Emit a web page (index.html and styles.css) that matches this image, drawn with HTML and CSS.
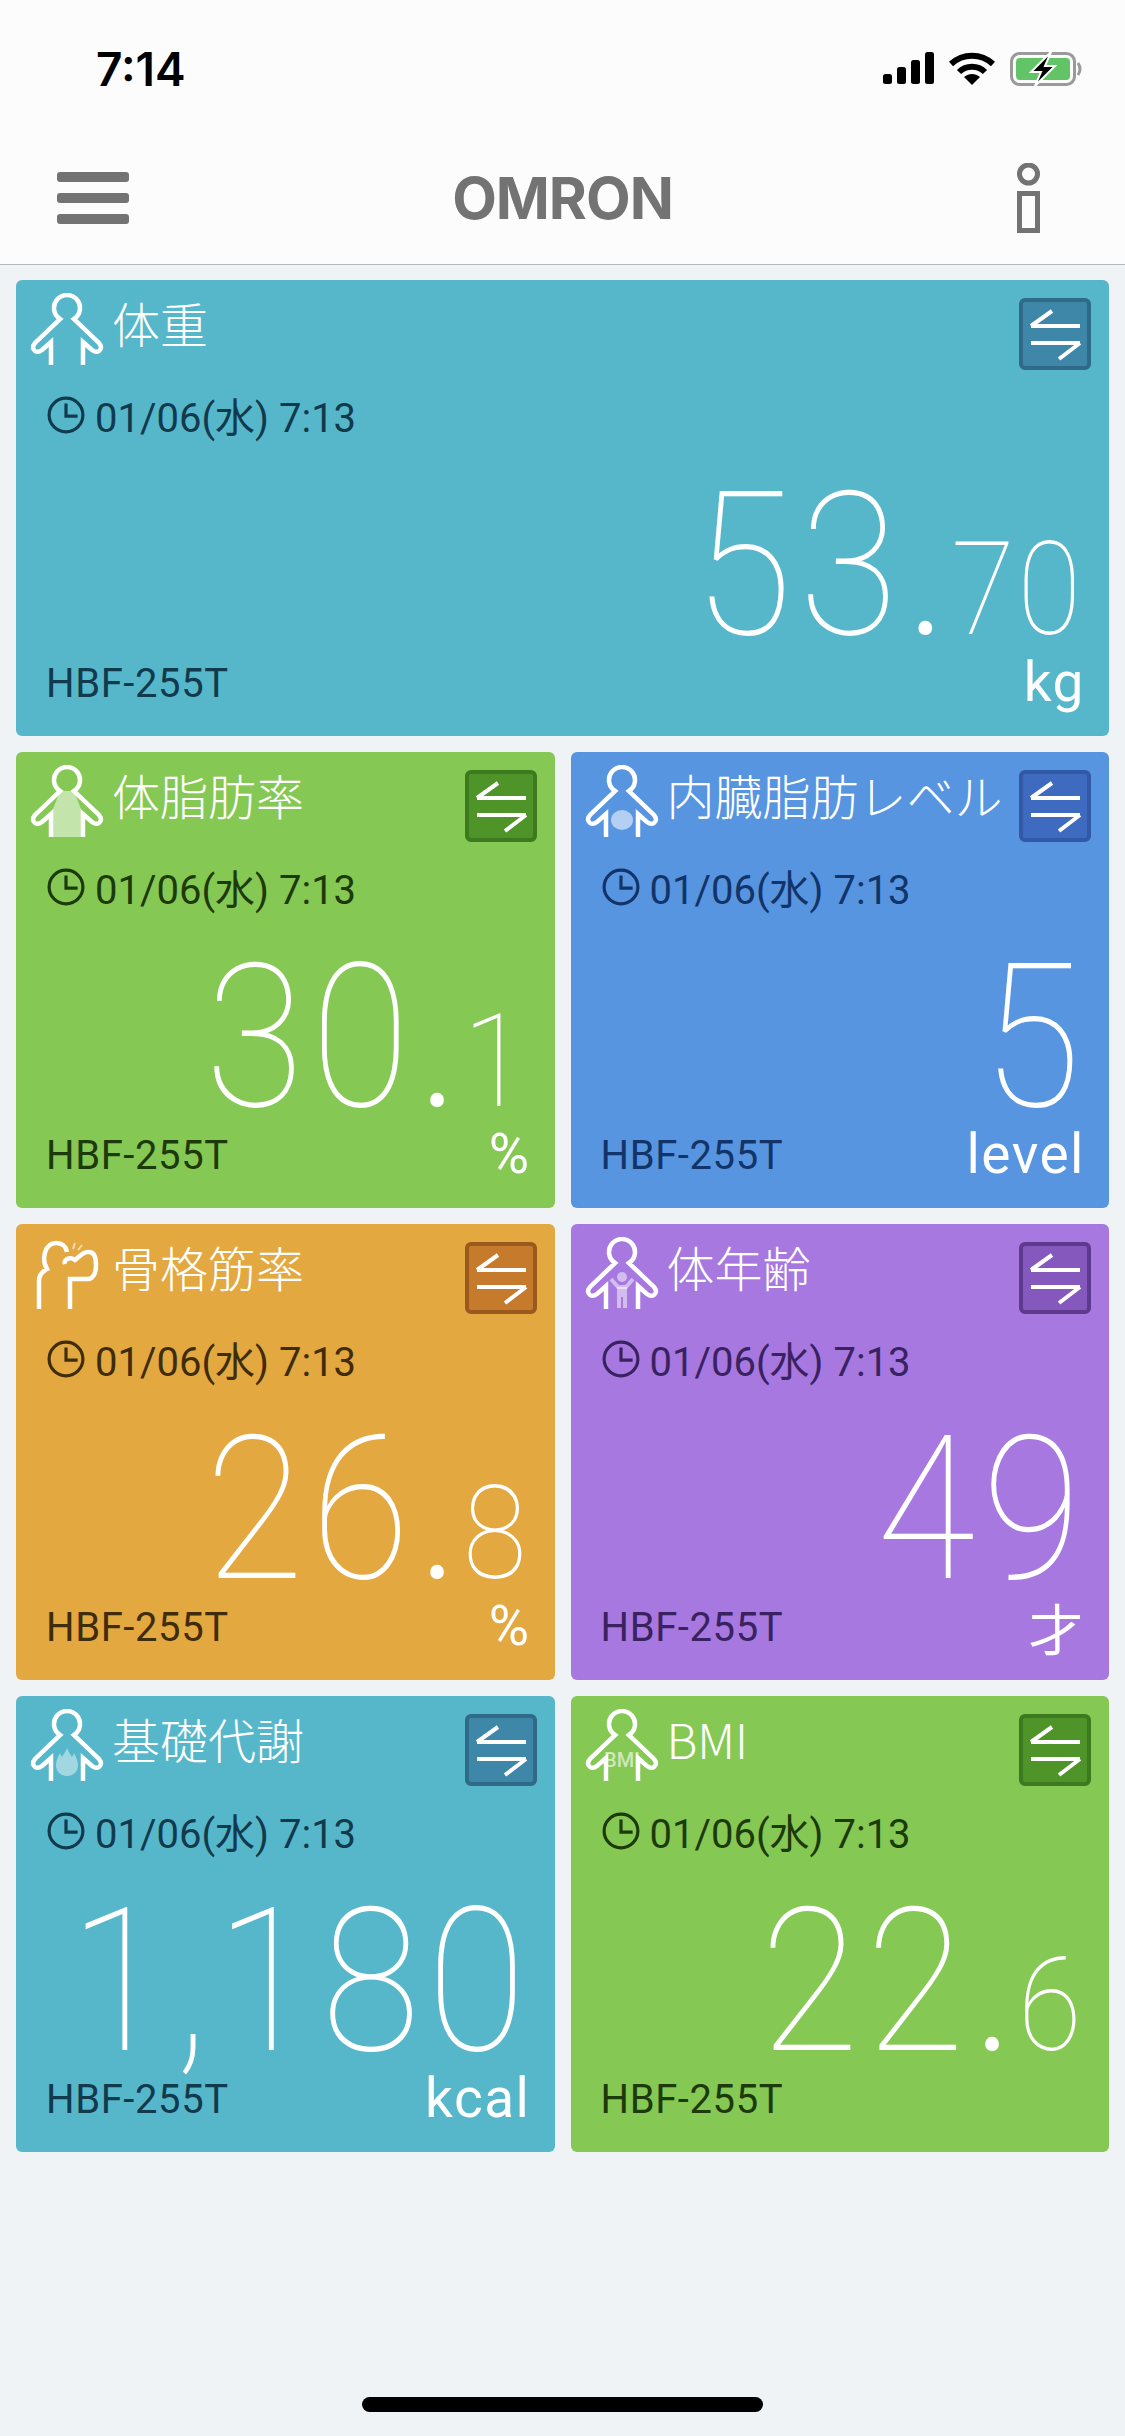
FILE: index.html
```html
<!DOCTYPE html>
<html lang="ja">
<head>
  <meta charset="utf-8">
  <title>OMRON connect</title>
  <link rel="stylesheet" href="styles.css">
</head>
<body>
  <svg class="defs" width="0" height="0">
    <symbol id="person" viewBox="0 0 76 76">
      <path d="M22 72 V49 L13 57 Q9 60 6 58 Q2 55 6 50 L31 26 A13 13 0 1 1 45 26 L70 50 Q74 55 70 58 Q67 60 63 57 L54 49 V72" fill="none" stroke="currentColor" stroke-width="4.5"/>
    </symbol>
    <symbol id="muscle" viewBox="0 0 76 76">
      <path d="M10 72 V44 Q10 36 18 32 C12 22 16 6 27 6 C33 6 37 9 38 15 M41 72 V42 H60 Q67 40 67 28 Q67 15 60 15 C54 14 50 20 46 23 Q42 20 38 22 Q35 24 36 27" fill="none" stroke="currentColor" stroke-width="4.5"/>
      <path d="M44 12 L46 6 M49 13 L53 8" fill="none" stroke="currentColor" stroke-width="2" opacity=".6"/>
    </symbol>
    <symbol id="clock" viewBox="0 0 36 36">
      <circle cx="18" cy="18" r="16" fill="none" stroke="currentColor" stroke-width="3"/>
      <path d="M18 7 V19 H29" fill="none" stroke="currentColor" stroke-width="3"/>
    </symbol>
    <symbol id="swap" viewBox="0 0 64 64">
      <path d="M8 24 H57 M8 24 L29 9 M8 41 H57 M57 41 L36 57" fill="none" stroke="#fff" stroke-width="4"/>
    </symbol>
  </svg>

  <header class="header">
    <div class="status">
      <span class="time">7:14</span>
      <div class="status-icons">
        <svg class="signal" width="51" height="32" viewBox="0 0 51 32">
          <rect x="0" y="22" width="9" height="10" rx="2.5"/>
          <rect x="14" y="15" width="9" height="17" rx="2.5"/>
          <rect x="28" y="8" width="9" height="24" rx="2.5"/>
          <rect x="42" y="0" width="9" height="32" rx="2.5"/>
        </svg>
        <svg class="wifi" width="46" height="33" viewBox="0 0 46 33">
          <path d="M2 12 C14 1 32 1 44 12" fill="none" stroke="#000" stroke-width="6"/>
          <path d="M10 20 C17 13 29 13 36 20" fill="none" stroke="#000" stroke-width="6"/>
          <path d="M23 33 L15 25 C20 21 26 21 31 25 Z"/>
        </svg>
        <svg class="battery" width="73" height="34" viewBox="0 0 73 34">
          <rect x="1.5" y="1.5" width="63" height="31" rx="8" fill="none" stroke="#9a9a9a" stroke-width="3"/>
          <rect x="6" y="6" width="54" height="22" rx="4" fill="#62c466"/>
          <path d="M68 11 Q72 17 68 23" fill="none" stroke="#9a9a9a" stroke-width="3"/>
          <path d="M41 0 L21 20 H31 L25 34 L45 14 H35 Z" stroke="#fff" stroke-width="2"/>
        </svg>
      </div>
    </div>
    <nav class="nav">
      <div class="menu"><span></span><span></span><span></span></div>
      <span class="logo">OMRON</span>
      <svg class="info" width="31" height="70" viewBox="0 0 31 70">
        <circle cx="15.5" cy="11" r="9" fill="none" stroke="#737373" stroke-width="5"/>
        <rect x="6.5" y="30.5" width="18" height="37" fill="none" stroke="#737373" stroke-width="5"/>
      </svg>
    </nav>
  </header>

  <main class="cards">
    <section class="card card-wide teal">
      <div class="card-head">
        <svg class="icon"><use href="#person"/></svg>
        <h2 class="title">体重</h2>
        <div class="swap"><svg><use href="#swap"/></svg></div>
      </div>
      <div class="date"><svg class="clock"><use href="#clock"/></svg>01/06(水) 7:13</div>
      <div class="value"><span>53</span><span class="dot">.</span><span class="dec">70</span></div>
      <div class="card-foot"><span class="model">HBF-255T</span><span class="unit">kg</span></div>
    </section>

    <section class="card green">
      <div class="card-head">
        <svg class="icon" viewBox="0 0 76 76">
          <path d="M31 26 H45 L54 49 V72 H22 V49 Z" fill="#fff" opacity=".5"/>
          <use href="#person" width="76" height="76"/>
        </svg>
        <h2 class="title">体脂肪率</h2>
        <div class="swap"><svg><use href="#swap"/></svg></div>
      </div>
      <div class="date"><svg class="clock"><use href="#clock"/></svg>01/06(水) 7:13</div>
      <div class="value"><span>30</span><span class="dot">.</span><span class="dec">1</span></div>
      <div class="card-foot"><span class="model">HBF-255T</span><span class="unit">%</span></div>
    </section>

    <section class="card blue">
      <div class="card-head">
        <svg class="icon" viewBox="0 0 76 76">
          <ellipse cx="38" cy="55" rx="11" ry="10" fill="#fff" opacity=".55"/>
          <use href="#person" width="76" height="76"/>
        </svg>
        <h2 class="title">内臓脂肪レベル</h2>
        <div class="swap"><svg><use href="#swap"/></svg></div>
      </div>
      <div class="date"><svg class="clock"><use href="#clock"/></svg>01/06(水) 7:13</div>
      <div class="value"><span>5</span></div>
      <div class="card-foot"><span class="model">HBF-255T</span><span class="unit">level</span></div>
    </section>

    <section class="card orange">
      <div class="card-head">
        <svg class="icon"><use href="#muscle"/></svg>
        <h2 class="title">骨格筋率</h2>
        <div class="swap"><svg><use href="#swap"/></svg></div>
      </div>
      <div class="date"><svg class="clock"><use href="#clock"/></svg>01/06(水) 7:13</div>
      <div class="value"><span>26</span><span class="dot">.</span><span class="dec">8</span></div>
      <div class="card-foot"><span class="model">HBF-255T</span><span class="unit">%</span></div>
    </section>

    <section class="card purple">
      <div class="card-head">
        <svg class="icon" viewBox="0 0 76 76">
          <path d="M27 42 L34 50 H42 L49 42" fill="none" stroke="#fff" stroke-width="4" opacity=".5"/>
          <path d="M33 50 H43 V71 H39 V60 H37 V71 H33 Z" fill="#fff" opacity=".5"/>
          <circle cx="38" cy="40" r="5" fill="#fff" opacity=".5"/>
          <use href="#person" width="76" height="76"/>
        </svg>
        <h2 class="title">体年齢</h2>
        <div class="swap"><svg><use href="#swap"/></svg></div>
      </div>
      <div class="date"><svg class="clock"><use href="#clock"/></svg>01/06(水) 7:13</div>
      <div class="value"><span>49</span></div>
      <div class="card-foot"><span class="model">HBF-255T</span><span class="unit unit-jp">才</span></div>
    </section>

    <section class="card teal">
      <div class="card-head">
        <svg class="icon" viewBox="0 0 76 76">
          <path d="M38 39 C40 44 42 46 43 48 C44 46 45 45 45 44 C47 48 49 52 49 56 C49 63 44 67 38 67 C32 67 27 63 27 56 C27 52 29 48 31 44 C31 45 32 46 33 48 C34 46 36 44 38 39 Z" fill="#fff" opacity=".45"/>
          <use href="#person" width="76" height="76"/>
        </svg>
        <h2 class="title">基礎代謝</h2>
        <div class="swap"><svg><use href="#swap"/></svg></div>
      </div>
      <div class="date"><svg class="clock"><use href="#clock"/></svg>01/06(水) 7:13</div>
      <div class="value"><span>1,180</span></div>
      <div class="card-foot"><span class="model">HBF-255T</span><span class="unit">kcal</span></div>
    </section>

    <section class="card green">
      <div class="card-head">
        <svg class="icon" viewBox="0 0 76 76">
          <use href="#person" width="76" height="76"/>
          <text class="icon-text" x="38" y="58" text-anchor="middle">BMI</text>
        </svg>
        <h2 class="title">BMI</h2>
        <div class="swap"><svg><use href="#swap"/></svg></div>
      </div>
      <div class="date"><svg class="clock"><use href="#clock"/></svg>01/06(水) 7:13</div>
      <div class="value"><span>22</span><span class="dot">.</span><span class="dec">6</span></div>
      <div class="card-foot"><span class="model">HBF-255T</span><span class="unit"></span></div>
    </section>
  </main>

  <div class="home-bar"></div>
</body>
</html>
```

FILE: styles.css
```css
body {
  margin: 0;
  width: 1125px;
  height: 2436px;
  overflow: hidden;
  background-color: #eff3f6;
  font-family: "Roboto", "Noto Sans CJK JP", sans-serif;
}

.defs {
  display: block;
  height: 0;
}

.header {
  height: 264px;
  background-color: #fcfcfd;
  border-bottom: 1px solid #b6b9bb;
}

.status {
  height: 132px;
  box-sizing: border-box;
  padding: 52px 42px 0 96px;
  display: flex;
  justify-content: space-between;
  align-items: flex-start;
}

.time {
  font-family: "Inter", sans-serif;
  font-size: 46px;
  font-weight: 600;
  line-height: 34px;
  color: #000;
}

.status-icons {
  display: flex;
  gap: 15px;
  align-items: flex-start;
}

.nav {
  height: 132px;
  box-sizing: border-box;
  padding: 0 57px;
  display: grid;
  grid-template-columns: 1fr auto 1fr;
  align-items: center;
}

.menu {
  width: 72px;
  display: flex;
  flex-direction: column;
  gap: 11px;
}

.menu span {
  height: 10px;
  background-color: #737373;
  border-radius: 3px;
}

.logo {
  font-family: "Inter", sans-serif;
  font-size: 58px;
  font-weight: 700;
  letter-spacing: -1px;
  line-height: 42px;
  color: #737373;
}

.info {
  justify-self: end;
  margin-right: 24px;
}

.cards {
  padding: 15px 16px 0;
  display: grid;
  grid-template-columns: 1fr 1fr;
  grid-auto-rows: 456px;
  gap: 16px;
}

.card {
  border-radius: 6px;
  overflow: hidden;
}

.card-wide {
  grid-column: span 2;
}

.teal { background-color: #56b7ca; --dark: #123a4d; --btn: #3f87a8; --btn-edge: #2f6a88; }
.green { background-color: #86c854; --dark: #1c3a0a; --btn: #4f9428; --btn-edge: #3d7a1f; }
.blue { background-color: #5795e0; --dark: #123468; --btn: #3e6ac0; --btn-edge: #3259a6; }
.orange { background-color: #e3a83f; --dark: #3f2c0a; --btn: #c67a2c; --btn-edge: #9a5a1e; }
.purple { background-color: #a678e0; --dark: #3a2260; --btn: #8458bd; --btn-edge: #5e3a8e; }

.card-head {
  height: 105px;
  box-sizing: border-box;
  padding: 13px 18px 0 13px;
  display: flex;
  align-items: flex-start;
  color: #fff;
}

.icon {
  width: 76px;
  height: 76px;
  flex: none;
  color: #fff;
}

.icon-text {
  font-size: 20px;
  font-weight: 500;
  fill: #fff;
  opacity: .6;
}

.title {
  margin: -1px 0 0 7px;
  flex: 1;
  font-family: "Noto Sans CJK JP", sans-serif;
  font-size: 48px;
  font-weight: 300;
  line-height: 60px;
  white-space: nowrap;
}

.swap {
  width: 72px;
  height: 72px;
  margin-top: 5px;
  box-sizing: border-box;
  border: 4px solid var(--btn-edge);
  border-radius: 6px;
  background-color: var(--btn);
  flex: none;
}

.swap svg {
  display: block;
  width: 64px;
  height: 64px;
}

.date {
  height: 60px;
  padding-left: 31px;
  display: flex;
  align-items: center;
  font-size: 40px;
  color: var(--dark);
  white-space: nowrap;
}

.clock {
  width: 38px;
  height: 38px;
  margin-right: 10px;
  flex: none;
}

/* digits in the reference are narrower than Roboto, so the whole figure is squeezed */
.value {
  margin-top: 21px;
  height: 200px;
  padding-right: 28px;
  display: flex;
  justify-content: flex-end;
  align-items: baseline;
  font-size: 200px;
  font-weight: 100;
  line-height: 200px;
  letter-spacing: 8px;
  color: #fff;
  white-space: nowrap;
  transform: scaleX(.9);
  transform-origin: right center;
}

.value span:only-child {
  margin-right: -4px;
}

.dot {
  margin: 0 13px 0 8px;
  font-size: 110px;
  font-weight: 500;
  letter-spacing: 0;
}

.dec {
  font-size: 129px;
  letter-spacing: 3px;
}

.card-foot {
  padding: 0 24px 0 30px;
  display: flex;
  justify-content: space-between;
  align-items: flex-start;
}

.model {
  font-size: 40px;
  line-height: 36px;
  letter-spacing: .6px;
  color: var(--dark);
}

.unit {
  font-size: 55px;
  line-height: 32px;
  letter-spacing: 1.5px;
  color: #fff;
}

.unit-jp {
  font-family: "Noto Sans CJK JP", sans-serif;
  font-weight: 400;
}

.home-bar {
  width: 401px;
  height: 15px;
  margin: 245px auto 0;
  border-radius: 8px;
  background-color: #000;
}
```
